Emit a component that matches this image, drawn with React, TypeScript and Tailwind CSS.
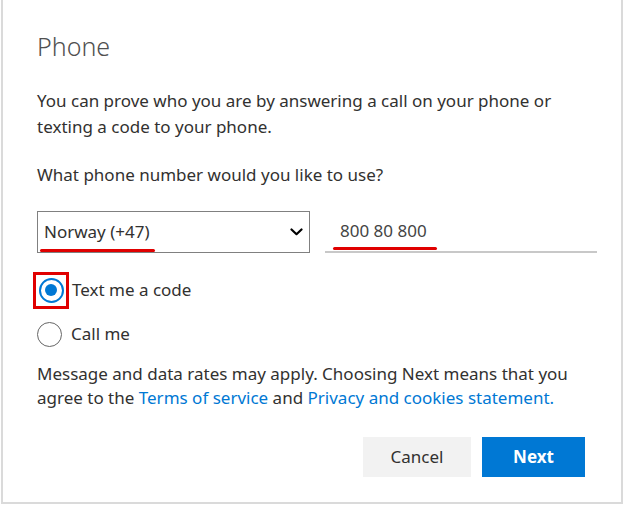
import React from "react";

const App = () => {
  return (
    <div className="w-[625px] h-[507px] bg-white">
      <div
        className="ml-[1px] w-[622px] h-[504px] border-x-2 border-b-2 border-[#dadada] pl-[34px] pr-[24px] pt-[30px] text-[#323130]"
        style={{ fontFamily: '"Noto Sans", "Open Sans", sans-serif' }}
      >
        <h1 className="text-[25px] leading-[32px] font-light text-[#505050]">Phone</h1>

        <p className="mt-[26px] text-[17px] leading-[26px]">
          You can prove who you are by answering a call on your phone or
          <br />
          texting a code to your phone.
        </p>

        <p className="mt-[22px] text-[17px] leading-[26px]">What phone number would you like to use?</p>

        <div className="mt-[23px] flex items-end gap-[15px]">
          <div className="relative w-[274px] h-[42px] border border-[#808080] flex items-center pl-[6px] pr-[6px]">
            <span className="text-[17px]">Norway (+47)</span>
            <svg className="ml-auto" width="13" height="8" viewBox="0 0 13 8">
              <path d="M1.5 1.5 L6.5 6.2 L11.5 1.5" fill="none" stroke="#000" strokeWidth="2.2" strokeLinecap="round" strokeLinejoin="round" />
            </svg>
            <div className="absolute left-[2px] bottom-0 w-[115px] h-[3px] rounded-full bg-[#e00000]" />
          </div>
          <div className="relative w-[273px] h-[42px] border-b-2 border-[#c8c8c8] flex items-center pl-[15px]">
            <span className="text-[17px] text-[#444]">800 80 800</span>
            <div className="absolute left-[8px] bottom-[1px] w-[104px] h-[3px] rounded-full bg-[#e00000]" />
          </div>
        </div>

        <div className="mt-[18px] flex flex-col gap-[6px]">
          <div className="flex items-center h-[38px]">
            <div className="-ml-[4px] w-[36px] h-[37px] border-[3px] border-[#e00000] flex items-center justify-center">
              <div className="w-[25px] h-[25px] rounded-full border-2 border-[#0078d4] flex items-center justify-center">
                <div className="w-[12px] h-[12px] rounded-full bg-[#0078d4]" />
              </div>
            </div>
            <span className="ml-[3px] text-[17px]">Text me a code</span>
          </div>
          <div className="flex items-center h-[38px]">
            <div className="w-[25px] h-[25px] rounded-full border-[1.5px] border-[#666]" />
            <span className="ml-[9px] text-[17px]">Call me</span>
          </div>
        </div>

        <p className="mt-[9px] text-[17px] leading-[24px]">
          Message and data rates may apply. Choosing Next means that you
          <br />
          agree to the <a className="text-[#0078d4]">Terms of service</a> and{" "}
          <a className="text-[#0078d4]">Privacy and cookies statement.</a>
        </p>

        <div className="mt-[27px] flex justify-end gap-[11px] pr-[12px]">
          <button className="w-[108px] h-[40px] bg-[#f2f2f2] text-[17px] text-[#323130]">Cancel</button>
          <button className="w-[103px] h-[40px] bg-[#0078d4] text-[17px] font-bold text-white">Next</button>
        </div>
      </div>
    </div>
  );
};

export default App;
